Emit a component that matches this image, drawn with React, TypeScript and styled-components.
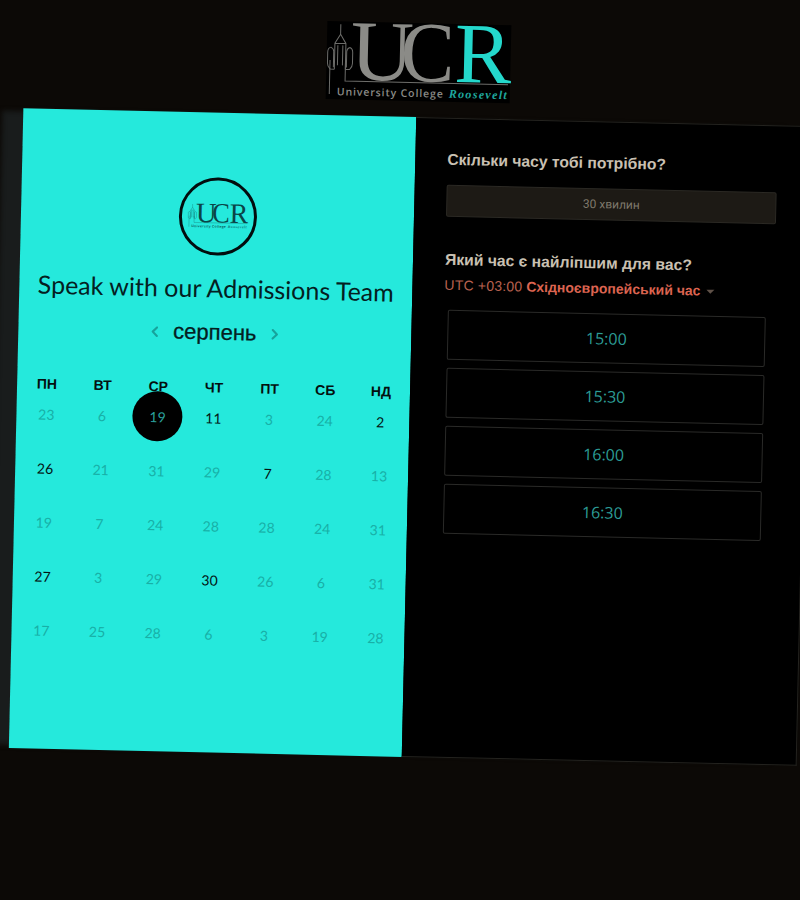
import React from 'react';
import styled, { createGlobalStyle } from 'styled-components';
import { ChevronLeft, ChevronRight } from 'lucide-react';

const GlobalStyle = createGlobalStyle`
  html, body {
    margin: 0;
    padding: 0;
    height: 100%;
    overflow: hidden;
    background: #0c0906;
    font-family: 'Liberation Sans', Arial, sans-serif;
  }
`;

const Page = styled.div`
  width: 788px;
  margin-left: 15.5px;
  transform: rotate(1.3deg);
  transform-origin: 394px 437px;
`;

const Header = styled.header`
  height: 117px;
  display: flex;
  align-items: center;
  justify-content: center;
  padding-top: 7px;
  box-sizing: border-box;
`;

const Card = styled.main`
  display: flex;
  height: 640px;
  box-shadow: -24px 0 5px -3px #191c1c;
`;

const CalendarPanel = styled.section`
  width: 393px;
  flex: none;
  background: #25e9dc;
  padding-top: 65px;
  box-sizing: border-box;
  display: flex;
  flex-direction: column;
  align-items: center;
`;

const LogoCircle = styled.div`
  width: 78px;
  height: 78px;
  border: 3px solid #020d0e;
  border-radius: 50%;
  box-sizing: border-box;
  display: flex;
  align-items: center;
  justify-content: center;
`;

const Title = styled.h1`
  margin: 16px 0 0;
  font-family: Lato, 'Open Sans', sans-serif;
  font-weight: 400;
  font-size: 25px;
  line-height: 32px;
  color: #04201f;
  white-space: nowrap;
`;

const MonthRow = styled.div`
  margin-top: 14px;
  height: 30px;
  display: flex;
  align-items: center;
  gap: 10px;
  color: #17a39b;
`;

const MonthName = styled.span`
  font-family: 'Liberation Sans', Arial, sans-serif;
  font-size: 22px;
  color: #04201f;
  -webkit-text-stroke: 0.3px #04201f;
`;

const WeekdayRow = styled.div`
  width: 390px;
  margin: 32px 0 0 1px;
  display: grid;
  grid-template-columns: repeat(7, 55.7px);
`;

const Weekday = styled.span`
  height: 16px;
  line-height: 16px;
  text-align: center;
  font-size: 14px;
  font-weight: 700;
  color: #04100f;
`;

const CalendarGrid = styled.div`
  width: 390px;
  margin-left: 1px;
  display: grid;
  grid-template-columns: repeat(7, 55.7px);
  grid-auto-rows: 44px;
  row-gap: 10px;
`;

const Day = styled.div<{ $active?: boolean }>`
  display: flex;
  align-items: center;
  justify-content: center;
  font-family: Lato, 'Open Sans', sans-serif;
  font-size: 14px;
  color: ${(p) => (p.$active ? '#031413' : '#18b0a7')};
`;

const SelectedDay = styled.span`
  flex: none;
  width: 50px;
  height: 50px;
  border-radius: 50%;
  background: #000;
  color: #2a9f9a;
  display: flex;
  align-items: center;
  justify-content: center;
`;

const BookingPanel = styled.section`
  flex: 1;
  background: #000;
  border: 1px solid #24231f;
  border-left: none;
  box-sizing: border-box;
  padding: 31px 0 0 32px;
`;

const Question = styled.h2<{ $gap?: number }>`
  margin: ${(p) => p.$gap ?? 0}px 0 0;
  font-size: 15.7px;
  line-height: 20px;
  font-weight: 700;
  color: #c9c0b2;
`;

const Duration = styled.div`
  width: 330px;
  height: 32px;
  margin-top: 15px;
  box-sizing: border-box;
  background: #1d1a15;
  border: 1px solid #2b2924;
  border-radius: 2px;
  display: flex;
  align-items: center;
  justify-content: center;
  font-family: Roboto, sans-serif;
  font-size: 12px;
  color: #7f796c;
`;

const Timezone = styled.div`
  margin-top: 5px;
  display: flex;
  align-items: center;
  height: 20px;
  font-size: 14px;
  letter-spacing: 0.2px;
  color: #b8604f;
`;

const TimezoneName = styled.strong`
  margin-left: 4px;
  letter-spacing: 0;
  color: #dc6450;
`;

const Caret = styled.span`
  margin-left: 6px;
  margin-top: 2px;
  border-left: 4px solid transparent;
  border-right: 4px solid transparent;
  border-top: 4px solid #5f5148;
`;

const Slots = styled.div`
  margin: 15px 0 0 4px;
  width: 318px;
  display: flex;
  flex-direction: column;
  gap: 8px;
`;

const Slot = styled.button`
  height: 50px;
  padding: 0;
  box-sizing: border-box;
  background: #000;
  border: 1px solid #2a2a28;
  border-radius: 2px;
  font-family: 'Open Sans', sans-serif;
  font-size: 16px;
  color: #2c9c96;
`;

type MarkProps = {
  width: number;
  plate?: string;
  grey: string;
  accent: string;
  script: string;
  line: string;
};

// the college logo: used large on the header plate, small in the circle
const UcrMark = ({ width, plate, grey, accent, script, line }: MarkProps): JSX.Element => (
  <svg width={width} viewBox="0 0 184 78" style={{ display: 'block', overflow: 'visible' }}>
    {plate && <rect width="184" height="78" fill={plate} />}
    <g fill="none" stroke={line} strokeWidth="1">
      <path d="M3.5 73V39M19 40V59.5H182" />
      <path d="M13.5 3V13M13.5 13L8 22V48M13.5 13L19 22V48M8 22H19" />
      <path d="M4 26C1 27 1 29 1 31V42C1 46 3 47 4 48H8M4 26C6 27 7 28 7 30V46" />
      <path d="M23 26C26 27 26 29 26 31V42C26 46 24 47 23 48H19M23 26C21 27 20 28 20 30V46" />
      <path d="M11 24V44M16 24V44" />
    </g>
    <g fontFamily="'Liberation Serif', serif" fontSize="86">
      <text x="24" y="58" fill={grey} textLength="63" lengthAdjust="spacingAndGlyphs">U</text>
      <text x="74" y="58" fill={grey} textLength="54" lengthAdjust="spacingAndGlyphs">C</text>
      <text x="128" y="58" fill={accent} textLength="57" lengthAdjust="spacingAndGlyphs">R</text>
    </g>
    <text x="11" y="74" fill={grey} fontFamily="'Open Sans', sans-serif" fontSize="10.5" fontWeight="600" textLength="106">
      University College
    </text>
    <text x="123" y="74" fill={script} fontFamily="'Liberation Serif', serif" fontSize="12" fontStyle="italic" fontWeight="700" textLength="58">
      Roosevelt
    </text>
  </svg>
);

const weekdays = ['ПН', 'ВТ', 'СР', 'ЧТ', 'ПТ', 'СБ', 'НД'];

const days = [23, 6, 19, 11, 3, 24, 2, 26, 21, 31, 29, 7, 28, 13, 19, 7, 24, 28, 28, 24, 31, 27, 3, 29, 30, 26, 6, 31, 17, 25, 28, 6, 3, 19, 28];
const activeCells = [3, 6, 7, 11, 21, 24];
const selectedCell = 2;

const slots = ['15:00', '15:30', '16:00', '16:30'];

const App = (): JSX.Element => (
  <>
    <GlobalStyle />
    <Page>
      <Header>
        <UcrMark width={184} plate="#000" grey="#8b8b87" accent="#24d8cc" script="#1fa79d" line="#6d6d6a" />
      </Header>
      <Card>
        <CalendarPanel>
          <LogoCircle>
            <UcrMark width={60} grey="#0a4547" accent="#0a4547" script="#12807c" line="#0f6663" />
          </LogoCircle>
          <Title>Speak with our Admissions Team</Title>
          <MonthRow>
            <ChevronLeft size={17} strokeWidth={3} />
            <MonthName>серпень</MonthName>
            <ChevronRight size={17} strokeWidth={3} />
          </MonthRow>
          <WeekdayRow>
            {weekdays.map((day) => (
              <Weekday key={day}>{day}</Weekday>
            ))}
          </WeekdayRow>
          <CalendarGrid>
            {days.map((day, i) => (
              <Day key={i} $active={activeCells.includes(i)}>
                {i === selectedCell ? <SelectedDay>{day}</SelectedDay> : day}
              </Day>
            ))}
          </CalendarGrid>
        </CalendarPanel>
        <BookingPanel>
          <Question>Скільки часу тобі потрібно?</Question>
          <Duration>30 хвилин</Duration>
          <Question $gap={33}>Який час є найліпшим для вас?</Question>
          <Timezone>
            UTC +03:00
            <TimezoneName>Східноєвропейський час</TimezoneName>
            <Caret />
          </Timezone>
          <Slots>
            {slots.map((time) => (
              <Slot key={time}>{time}</Slot>
            ))}
          </Slots>
        </BookingPanel>
      </Card>
    </Page>
  </>
);

export default App;
